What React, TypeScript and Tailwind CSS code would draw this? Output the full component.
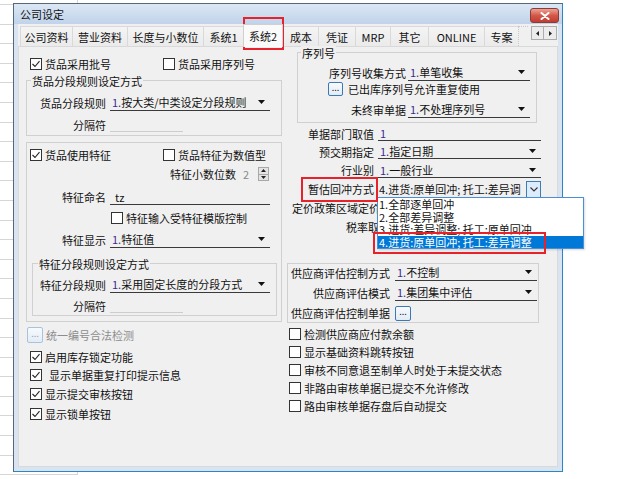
import React from "react"

const tabs = [
  { title: "公司资料", w: "w-[52px]" },
  { title: "营业资料", w: "w-[55px]" },
  { title: "长度与小数位", w: "w-[76px]" },
  { title: "系统1", w: "w-[40px]" },
  { title: "系统2", w: "w-[40px]", active: true },
  { title: "成本", w: "w-[35px]" },
  { title: "凭证", w: "w-[37px]" },
  { title: "MRP", w: "w-[35px]" },
  { title: "其它", w: "w-[38px]" },
  { title: "ONLINE", w: "w-[56px]" },
  { title: "专案", w: "w-[34px]" },
]

const options = [
  "1.全部逐单回冲",
  "2.全部差异调整",
  "3.进货:差异调整; 托工:原单回冲",
  "4.进货:原单回冲; 托工:差异调整",
]

const sheetRows = Array.from({ length: 24 })

function Box({ checked }: { checked?: boolean }) {
  return (
    <span className="flex h-[12px] w-[12px] shrink-0 items-center justify-center border border-[#333] bg-white">
      {checked && (
        <svg width="10" height="10" viewBox="0 0 10 10">
          <polyline points="1.5,5 4,7.5 8.5,2.2" fill="none" stroke="#222" strokeWidth="1.1" />
        </svg>
      )}
    </span>
  )
}

function Check({ checked, label, className = "" }: { checked?: boolean; label: string; className?: string }) {
  return (
    <div className={`flex h-[14px] items-center gap-[3px] whitespace-nowrap ${className}`}>
      <Box checked={checked} />
      <span>{label}</span>
    </div>
  )
}

function Arrow() {
  return (
    <svg width="7" height="4" viewBox="0 0 7 4" className="shrink-0">
      <polygon points="0,0 7,0 3.5,4" fill="#111" />
    </svg>
  )
}

function Val({ text }: { text: string }) {
  const m = text.match(/^(\d\.?)(.*)$/)
  if (!m) return <span className="whitespace-nowrap">{text}</span>
  return (
    <span className="whitespace-nowrap">
      <span className="text-[#3b2d8f]">{m[1]}</span>
      {m[2]}
    </span>
  )
}

function Combo({ value, className = "", arrow = true }: { value: string; className?: string; arrow?: boolean }) {
  return (
    <div className={`flex items-center justify-between border-b border-[#3a3a3a] pl-[2px] pr-[5px] ${className}`}>
      <Val text={value} />
      {arrow && <Arrow />}
    </div>
  )
}

function Field({
  label,
  labelClass,
  className = "",
  children,
}: {
  label: string
  labelClass: string
  className?: string
  children: React.ReactNode
}) {
  return (
    <div className={`flex items-center ${className}`}>
      <span className={`shrink-0 whitespace-nowrap text-right ${labelClass}`}>{label}</span>
      {children}
    </div>
  )
}

function Group({
  legend,
  className = "",
  legendClass = "",
  children,
}: {
  legend?: string
  className?: string
  legendClass?: string
  children: React.ReactNode
}) {
  return (
    <div className={`flex flex-col border border-[#d0d0d0] ${className}`}>
      {legend && <span className={`-mt-[7px] self-start bg-[#f0f0f0] px-[1px] ${legendClass}`}>{legend}</span>}
      {children}
    </div>
  )
}

function Dots({ disabled, className = "" }: { disabled?: boolean; className?: string }) {
  return (
    <span
      className={`flex shrink-0 items-center justify-center rounded-[2px] border bg-gradient-to-b from-[#f7fafd] to-[#e2ecf6] pb-[3px] text-[9px] leading-none ${
        disabled ? "border-[#a9c3dc] text-[#9aa6b2]" : "border-[#3d78b6] text-[#222]"
      } ${className}`}
    >
      ...
    </span>
  )
}

function Spinner() {
  return (
    <div className="ml-[9px] flex h-[14px] w-[11px] flex-col border border-[#a8a8a8] bg-[#e4e4e4]">
      <div className="flex flex-1 items-center justify-center border-b border-[#a8a8a8]">
        <svg width="5" height="3" viewBox="0 0 5 3">
          <polygon points="0,3 5,3 2.5,0" fill="#222" />
        </svg>
      </div>
      <div className="flex flex-1 items-center justify-center">
        <svg width="5" height="3" viewBox="0 0 5 3">
          <polygon points="0,0 5,0 2.5,3" fill="#222" />
        </svg>
      </div>
    </div>
  )
}

export default function App() {
  return (
    <div className="relative h-[479px] w-[620px] overflow-hidden bg-white font-['Noto_Sans_CJK_SC','Noto_Sans',sans-serif] text-[11px] leading-[14px] text-[#111]">
      {/* spreadsheet behind the dialog */}
      <div className="flex w-[78px] flex-col border-r border-[#d6d6d6]">
        <div className="h-[5px] border-b border-[#d6d6d6]" />
        {sheetRows.map((_, i) => (
          <div key={i} className="h-[19.6px] border-b border-[#d6d6d6]" />
        ))}
      </div>

      {/* dialog window */}
      <div className="absolute left-[13px] top-[3px] flex h-[469px] w-[550px] flex-col border border-[#56677a] border-b-[#2b87c3] border-r-[#2b87c3] bg-[#d9e4f2]">
        <div className="flex h-[20px] shrink-0 items-center justify-between bg-gradient-to-b from-[#dbe7f5] to-[#c0d3eb] pl-[6px] pr-[3px]">
          <span>公司设定</span>
          <span className="mt-[3px] flex h-[15px] w-[29px] items-center justify-center rounded-[3px] border border-[#8e3b33] bg-gradient-to-b from-[#e9a397] via-[#d4584a] to-[#c23c2e]">
            <svg width="10" height="8" viewBox="0 0 10 8">
              <path d="M1.5 1 L8.5 7 M8.5 1 L1.5 7" stroke="#fff" strokeWidth="2" strokeLinecap="round" />
            </svg>
          </span>
        </div>

        <div className="mx-[4px] mb-[4px] flex flex-1 flex-col bg-[#f0f0f0]">
          {/* tab strip */}
          <div className="flex h-[22px] shrink-0 items-end pl-[2px]">
            {tabs.map((t) =>
              t.active ? (
                <div
                  key={t.title}
                  className={`relative z-10 -mb-px flex h-[23px] items-center justify-center border border-b-0 border-[#d0d0d0] bg-[#fafafa] ${t.w}`}
                >
                  {t.title}
                </div>
              ) : (
                <div
                  key={t.title}
                  className={`flex h-[20px] items-center justify-center border-l border-t border-[#d9d9d9] bg-gradient-to-b from-[#f4f4f4] to-[#ebebeb] ${t.w}`}
                >
                  {t.title}
                </div>
              )
            )}
            <div className="h-[20px] w-[10px] border-l border-t border-dotted border-[#c8c8c8]" />
            <div className="mb-[6px] ml-auto mr-[1px] flex">
              <span className="flex h-[14px] w-[13px] items-center justify-center border border-[#adadad] bg-[#ececec]">
                <svg width="3" height="5" viewBox="0 0 3 5">
                  <polygon points="3,0 3,5 0,2.5" fill="#222" />
                </svg>
              </span>
              <span className="flex h-[14px] w-[13px] items-center justify-center border border-l-0 border-[#adadad] bg-[#ececec]">
                <svg width="3" height="5" viewBox="0 0 3 5">
                  <polygon points="0,0 0,5 3,2.5" fill="#222" />
                </svg>
              </span>
            </div>
          </div>

          {/* tab page */}
          <div className="flex-1 border border-[#d9d9d9] bg-[#f0f0f0]">
            <div className="grid grid-cols-[256px_253px] gap-x-[6px] pl-[7px]">
              {/* left column */}
              <div className="flex flex-col">
                <div className="ml-[4px] mt-[10px] flex">
                  <Check checked label="货品采用批号" className="w-[133px]" />
                  <Check label="货品采用序列号" />
                </div>

                <Group legend="货品分段规则设定方式" className="mt-[9px] pb-[3px]" legendClass="ml-[4px]">
                  <Field label="货品分段规则" labelClass="w-[79px]" className="mt-[6px]">
                    <Combo value="1.按大类/中类设定分段规则" className="ml-[4px] h-[17px] w-[160px]" />
                  </Field>
                  <Field label="分隔符" labelClass="w-[79px]" className="mt-[7px]">
                    <div className="ml-[4px] h-[14px] w-[73px] border-b border-[#cdcdcd]" />
                  </Field>
                </Group>

                <Group className="mt-[6px] pb-[5px]">
                  <div className="ml-[3px] mt-[5px] flex">
                    <Check checked label="货品使用特征" className="w-[133px]" />
                    <Check label="货品特征为数值型" />
                  </div>
                  <div className="mt-[5px] flex h-[14px] items-center justify-end pr-[12px]">
                    <span>特征小数位数</span>
                    <span className="ml-[7px] text-[#8a8a8a]">2</span>
                    <Spinner />
                  </div>
                  <Field label="特征命名" labelClass="w-[79px]" className="mt-[8px]">
                    <div className="ml-[4px] flex h-[16px] w-[160px] items-center border-b border-[#3a3a3a] pl-[5px]">tz</div>
                  </Field>
                  <Check label="特征输入受特征模版控制" className="ml-[84px] mt-[6px]" />
                  <Field label="特征显示" labelClass="w-[79px]" className="mt-[6px]">
                    <Combo value="1.特征值" className="ml-[4px] h-[17px] w-[160px]" />
                  </Field>

                  <Group legend="特征分段规则设定方式" className="ml-[5px] mr-[4px] mt-[15px] pb-[2px]" legendClass="ml-[5px]">
                    <Field label="特征分段规则" labelClass="w-[73px]" className="mt-[5px]">
                      <Combo value="1.采用固定长度的分段方式" className="ml-[4px] h-[17px] w-[160px]" />
                    </Field>
                    <Field label="分隔符" labelClass="w-[73px]" className="mt-[6px]">
                      <div className="ml-[4px] h-[14px] w-[73px] border-b border-[#cdcdcd]" />
                    </Field>
                  </Group>
                </Group>

                <div className="ml-[1px] mt-[5px] flex h-[16px] items-center">
                  <Dots disabled className="h-[16px] w-[16px]" />
                  <span className="ml-[3px] text-[#8d8d8d]">统一编号合法检测</span>
                </div>
                <Check checked label="启用库存锁定功能" className="ml-[4px] mt-[7px]" />
                <Check checked label=" 显示单据重复打印提示信息" className="ml-[4px] mt-[4px] [&>span:last-child]:pl-[4px]" />
                <Check checked label="显示提交审核按钮" className="ml-[4px] mt-[5px]" />
                <Check checked label="显示锁单按钮" className="ml-[4px] mt-[6px]" />
              </div>

              {/* right column */}
              <div className="flex flex-col">
                <Group legend="序列号" className="ml-[9px] mt-[5px] w-[240px] pb-[4px]" legendClass="ml-[3px]">
                  <Field label="序列号收集方式" labelClass="w-[108px]" className="mt-[4px]">
                    <Combo value="1.单笔收集" className="ml-[2px] h-[17px] w-[122px]" />
                  </Field>
                  <div className="mt-[1px] flex h-[14px] items-center">
                    <Dots className="ml-[30px] h-[14px] w-[15px]" />
                    <span className="ml-[5px]">已出库序列号允许重复使用</span>
                  </div>
                  <Field label="未终审单据" labelClass="w-[108px]" className="mt-[5px]">
                    <Combo value="1.不处理序列号" className="ml-[2px] h-[17px] w-[122px]" />
                  </Field>
                </Group>

                <Field label="单据部门取值" labelClass="w-[86px]" className="mt-[3px]">
                  <Combo value="1" arrow={false} className="ml-[4px] h-[15px] w-[163px]" />
                </Field>
                <Field label="预交期指定" labelClass="w-[86px]" className="mt-[3px]">
                  <Combo value="1.指定日期" className="ml-[4px] h-[15px] w-[163px]" />
                </Field>
                <Field label="行业别" labelClass="w-[86px]" className="mt-[3px]">
                  <Combo value="1.一般行业" className="ml-[4px] h-[16px] w-[163px]" />
                </Field>
                <Field label="暂估回冲方式" labelClass="w-[86px]" className="mt-[2px]">
                  <div className="ml-[4px] flex h-[18px] w-[163px] items-center">
                    <span className="min-w-0 flex-1 whitespace-nowrap pl-[1px]">4.进货:原单回冲; 托工:差异调</span>
                    <span className="flex h-[17px] w-[15px] shrink-0 items-center justify-center border border-[#3c7fb1] bg-[#dcecfc]">
                      <svg width="8" height="5" viewBox="0 0 8 5">
                        <polyline points="0.5,0.5 4,4 7.5,0.5" fill="none" stroke="#333" strokeWidth="1.1" />
                      </svg>
                    </span>
                  </div>
                </Field>
                <div className="ml-[4px] mt-[3px] h-[14px] w-[85px] overflow-hidden whitespace-nowrap">定价政策区域定价方式</div>
                <div className="ml-[58px] mt-[5px] h-[14px] w-[31px] overflow-hidden whitespace-nowrap">税率取值</div>

                <Group className="-ml-px mt-[29px] w-[252px] pb-[1px]">
                  <Field label="供应商评估控制方式" labelClass="w-[102px]">
                    <Combo value="1.不控制" className="ml-[5px] h-[17px] w-[142px]" />
                  </Field>
                  <Field label="供应商评估模式" labelClass="w-[102px]" className="mt-[3px]">
                    <Combo value="1.集团集中评估" className="ml-[5px] h-[17px] w-[142px]" />
                  </Field>
                  <Field label="供应商评估控制单据" labelClass="w-[102px]" className="mt-[4px] h-[16px]">
                    <Dots className="ml-[5px] h-[15px] w-[16px]" />
                  </Field>
                </Group>

                <Check label="检测供应商应付款余额" className="ml-[1px] mt-[4px]" />
                <Check label="显示基础资料跳转按钮" className="ml-[1px] mt-[4px]" />
                <Check label="审核不同意退至制单人时处于未提交状态" className="ml-[1px] mt-[4px]" />
                <Check label="非路由审核单据已提交不允许修改" className="ml-[1px] mt-[4px]" />
                <Check label="路由审核单据存盘后自动提交" className="ml-[1px] mt-[4px]" />
              </div>
            </div>
          </div>
        </div>
      </div>

      {/* open dropdown list */}
      <div className="absolute left-[377px] top-[197px] flex w-[207px] flex-col border border-[#4a8fd6] bg-white leading-[12.5px] shadow-[1px_1px_2px_rgba(0,0,0,0.15)]">
        {options.map((o, i) => (
          <div key={o} className={`h-[12.5px] whitespace-nowrap pl-[1px] ${i === 3 ? "bg-[#0078d7] text-white" : ""}`}>
            {o}
          </div>
        ))}
      </div>

      {/* red annotation boxes */}
      <div className="absolute left-[243px] top-[17px] h-[33px] w-[41px] border-2 border-[#e8222a]" />
      <div className="absolute left-[301px] top-[177px] h-[25px] w-[77px] border-2 border-[#e8222a]" />
      <div className="absolute left-[373px] top-[232px] h-[22px] w-[173px] border-2 border-[#e8222a]" />
    </div>
  )
}
